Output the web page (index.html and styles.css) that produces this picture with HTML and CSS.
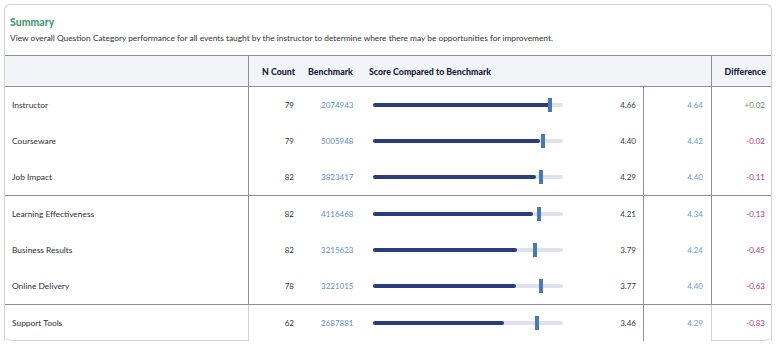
FILE: index.html
```html
<!DOCTYPE html>
<html>
<head>
<meta charset="utf-8">
<link rel="stylesheet" href="styles.css">
</head>
<body>
<div class="card">
  <div class="intro">
    <div class="title">Summary</div>
    <div class="desc">View overall Question Category performance for all events taught by the instructor to determine where there may be opportunities for improvement.</div>
  </div>
  <div class="row head">
    <div class="c name"></div>
    <div class="c ncount">N Count</div>
    <div class="c bench">Benchmark</div>
    <div class="c score">Score Compared to Benchmark</div>
    <div class="c diff">Difference</div>
  </div>

  <div class="row">
    <div class="c name">Instructor</div>
    <div class="c ncount">79</div>
    <div class="c bench">2074943</div>
    <div class="c score"><div class="track"><div class="fill" style="width:93.2%"></div><div class="mark" style="left:93.2%"></div></div><span class="val">4.66</span></div>
    <div class="c bscore">4.64</div>
    <div class="c diff pos">+0.02</div>
  </div>
  <div class="row">
    <div class="c name">Courseware</div>
    <div class="c ncount">79</div>
    <div class="c bench">5005948</div>
    <div class="c score"><div class="track"><div class="fill" style="width:88%"></div><div class="mark" style="left:89.4%"></div></div><span class="val">4.40</span></div>
    <div class="c bscore">4.42</div>
    <div class="c diff neg">-0.02</div>
  </div>
  <div class="row end">
    <div class="c name">Job Impact</div>
    <div class="c ncount">82</div>
    <div class="c bench">3823417</div>
    <div class="c score"><div class="track"><div class="fill" style="width:85.8%"></div><div class="mark" style="left:88.4%"></div></div><span class="val">4.29</span></div>
    <div class="c bscore">4.40</div>
    <div class="c diff neg">-0.11</div>
  </div>

  <div class="row">
    <div class="c name">Learning Effectiveness</div>
    <div class="c ncount">82</div>
    <div class="c bench">4116468</div>
    <div class="c score"><div class="track"><div class="fill" style="width:84.2%"></div><div class="mark" style="left:87.2%"></div></div><span class="val">4.21</span></div>
    <div class="c bscore">4.34</div>
    <div class="c diff neg">-0.13</div>
  </div>
  <div class="row">
    <div class="c name">Business Results</div>
    <div class="c ncount">82</div>
    <div class="c bench">3215623</div>
    <div class="c score"><div class="track"><div class="fill" style="width:75.8%"></div><div class="mark" style="left:85.2%"></div></div><span class="val">3.79</span></div>
    <div class="c bscore">4.24</div>
    <div class="c diff neg">-0.45</div>
  </div>
  <div class="row end">
    <div class="c name">Online Delivery</div>
    <div class="c ncount">78</div>
    <div class="c bench">3221015</div>
    <div class="c score"><div class="track"><div class="fill" style="width:75.4%"></div><div class="mark" style="left:88.4%"></div></div><span class="val">3.77</span></div>
    <div class="c bscore">4.40</div>
    <div class="c diff neg">-0.63</div>
  </div>

  <div class="row last">
    <div class="c name">Support Tools</div>
    <div class="c ncount">62</div>
    <div class="c bench">2687881</div>
    <div class="c score"><div class="track"><div class="fill" style="width:69.2%"></div><div class="mark" style="left:86.2%"></div></div><span class="val">3.46</span></div>
    <div class="c bscore">4.29</div>
    <div class="c diff neg">-0.83</div>
  </div>
</div>
</body>
</html>
```
FILE: styles.css
```css
* { box-sizing: border-box; }
html, body { margin: 0; padding: 0; background: #fff; }
body {
  padding: 4px 8px 0 4px;
  font-family: Lato, "Liberation Sans", sans-serif;
  color: #333;
}
.card {
  width: 768px;
  border: 1px solid #d2d2d6;
  border-bottom: 0;
  border-radius: 6px 6px 0 0;
}
.intro {
  height: 50px;
  padding: 10px 5px 0 5px;
}
.title {
  font-size: 10.5px;
  line-height: 14px;
  font-weight: 900;
  color: #4b9a7c;
}
.desc {
  margin-top: 3px;
  font-size: 8.35px;
  line-height: 12px;
  color: #333;
}
.row {
  display: grid;
  grid-template-columns: 244px 51px 65px 279px 68px 59px;
  height: 36px;
  align-items: stretch;
  font-size: 8px;
}
.row.end { height: 37px; border-bottom: 1px solid #8e8e9b; }
.row.head {
  grid-template-columns: 244px 51px 65px 347px 59px;
  height: 32px;
  background: #f3f4f8;
  border-top: 1px solid #8e8e9b;
  border-bottom: 1px solid #8e8e9b;
  font-size: 8.8px;
  font-weight: 900;
  color: #1a1d3a;
}
.c {
  display: flex;
  align-items: center;
  white-space: nowrap;
}
.name {
  padding-left: 7px;
  border-right: 1px solid #8e8e9b;
  color: #2e2e33;
  font-size: 8.4px;
}
.ncount { justify-content: flex-end; padding-right: 6px; color: #333; }
.bench { padding-left: 21px; color: #5f8fcd; }
.score { padding-left: 8px; padding-right: 7px; border-right: 1px solid #8e8e9b; }
.bscore { justify-content: flex-end; padding-right: 8px; border-right: 1px solid #8e8e9b; color: #6e9bd2; }
.diff { justify-content: flex-end; padding-right: 6px; }
.pos { color: #7b8a5e; }
.neg { color: #c2367f; }

.head .name { border-right: 1px solid #8e8e9b; }
.head .ncount { padding-right: 5px; color: #1a1d3a; }
.head .bench { padding-left: 8px; color: #1a1d3a; }
.head .score { padding-left: 4px; border-right: 1px solid #8e8e9b; }
.head .diff { padding-right: 5px; }

.track {
  position: relative;
  width: 190px;
  height: 4px;
  border-radius: 2px;
  background: #dde2ec;
}
.fill {
  height: 4px;
  border-radius: 2px;
  background: #2b3c7e;
}
.mark {
  position: absolute;
  top: -5px;
  width: 4px;
  height: 14px;
  margin-left: -2px;
  background: #4878b6;
}
.val {
  margin-left: auto;
  color: #3a3a44;
  font-weight: 400;
  font-size: 8px;
}

.last .name {
  border-right: 1px solid #d2d2d6;
  border-bottom: 1px solid #d2d2d6;
  border-bottom-left-radius: 6px;
}
.last .diff {
  border-bottom: 1px solid #d2d2d6;
  border-bottom-right-radius: 6px;
}
.last .bscore { border-right: 1px solid #d2d2d6; }
```
